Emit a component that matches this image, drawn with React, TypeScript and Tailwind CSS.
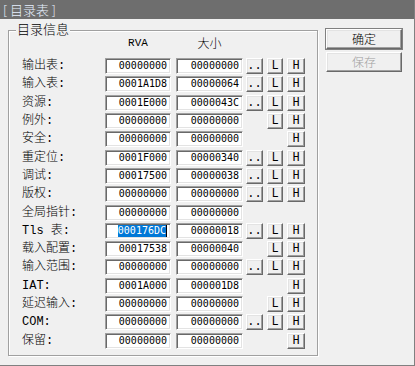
const rows = [
  { label: "输出表:", rva: "00000000", size: "00000000", btns: "dlh" },
  { label: "输入表:", rva: "0001A1D8", size: "00000064", btns: "dlh" },
  { label: "资源:", rva: "0001E000", size: "0000043C", btns: "dlh" },
  { label: "例外:", rva: "00000000", size: "00000000", btns: "lh" },
  { label: "安全:", rva: "00000000", size: "00000000", btns: "h" },
  { label: "重定位:", rva: "0001F000", size: "00000340", btns: "dlh" },
  { label: "调试:", rva: "00017500", size: "00000038", btns: "dlh" },
  { label: "版权:", rva: "00000000", size: "00000000", btns: "dlh" },
  { label: "全局指针:", rva: "00000000", size: "00000000", btns: "" },
  { label: "Tls 表:", rva: "000176DC", size: "00000018", btns: "dlh", selected: true },
  { label: "载入配置:", rva: "00017538", size: "00000040", btns: "lh" },
  { label: "输入范围:", rva: "00000000", size: "00000000", btns: "dlh" },
  { label: "IAT:", rva: "0001A000", size: "000001D8", btns: "h" },
  { label: "延迟输入:", rva: "00000000", size: "00000000", btns: "lh" },
  { label: "COM:", rva: "00000000", size: "00000000", btns: "dlh" },
  { label: "保留:", rva: "00000000", size: "00000000", btns: "h" },
];

const raised =
  "bg-[#f0f0f0] border border-t-white border-l-white border-b-[#696969] border-r-[#696969] shadow-[inset_-1px_-1px_0_#a0a0a0,inset_1px_1px_0_#e3e3e3]";

const HexBox = ({ value, width, selected }: { value: string; width: string; selected?: boolean }) => (
  <div
    className={`${width} h-[16px] bg-white border border-t-[#a0a0a0] border-l-[#a0a0a0] border-b-white border-r-white shadow-[inset_1px_1px_0_#696969,inset_-1px_-1px_0_#e3e3e3] flex items-center justify-end pr-[3px] font-['DejaVu_Sans_Mono',monospace] font-normal text-[10px] leading-[12px] text-black`}
  >
    {selected ? (
      <>
        <span className="bg-[#0078d7] text-white">{value}</span>
        <span className="w-[1px] h-[12px] bg-black" />
      </>
    ) : (
      value
    )}
  </div>
);

const SmallBtn = ({ text, width, show }: { text: string; width: string; show: boolean }) =>
  show ? (
    <div
      className={`${width} h-[16px] ${raised} flex items-center justify-center font-['Liberation_Mono',monospace] font-normal text-[12px] leading-[12px] text-black`}
    >
      {text}
    </div>
  ) : (
    <div className={`${width} h-[16px]`} />
  );

export default function App() {
  return (
    <div className="w-[415px] h-[366px] bg-[#f0f0f0] flex flex-col border-r border-b border-[#808080] font-['Noto_Sans_CJK_SC',sans-serif] font-light overflow-hidden">
      <div className="h-[19px] bg-[#6e6e6e] pl-[3px] text-[13px] leading-[19px] text-[#e6f0ff]">
        [ 目录表 ]
      </div>
      <div className="flex flex-1">
        <div className="pl-[8px] pt-[11px]">
          <div className="relative w-[310px] h-[326px] border border-[#a0a0a0] shadow-[1px_1px_0_#ffffff,inset_1px_1px_0_#ffffff] pl-[13px]">
            <span className="absolute left-[7px] top-[-10px] px-[1px] bg-[#f0f0f0] text-[13px] leading-[16px] text-black">
              目录信息
            </span>
            <div className="h-[24px] flex items-center mb-[2px] pl-[83px]">
              <div className="w-[66px] text-center font-['Liberation_Mono',monospace] font-normal text-[11px] text-black">RVA</div>
              <div className="w-[5px]" />
              <div className="w-[67px] text-center text-[12px] text-black">大小</div>
            </div>
            <div className="flex flex-col">
              {rows.map((r, i) => (
                <div key={i} className="h-[18.3px] flex items-center">
                  <div className="w-[83px] font-['Liberation_Mono','Noto_Sans_CJK_SC',monospace] text-[12px] leading-[14px] text-black whitespace-nowrap">
                    {r.label}
                  </div>
                  <HexBox value={r.rva} width="w-[66px]" selected={r.selected} />
                  <div className="w-[5px]" />
                  <HexBox value={r.size} width="w-[67px]" />
                  <div className="w-[3px]" />
                  <SmallBtn text=".." width="w-[17px]" show={r.btns.includes("d")} />
                  <div className="w-[4px]" />
                  <SmallBtn text="L" width="w-[16px]" show={r.btns.includes("l")} />
                  <div className="w-[4px]" />
                  <SmallBtn text="H" width="w-[18px]" show={r.btns.includes("h")} />
                </div>
              ))}
            </div>
          </div>
        </div>
        <div className="ml-[8px] pt-[10px] flex flex-col gap-[3px]">
          <div className={`w-[76px] h-[20px] ${raised} outline outline-1 outline-[#808080] flex items-center justify-center text-[12px] leading-[14px] text-black`}>
            确定
          </div>
          <div className={`w-[76px] h-[20px] ${raised} flex items-center justify-center text-[12px] leading-[14px] text-[#a0a0a0]`}>
            保存
          </div>
        </div>
      </div>
    </div>
  );
}
